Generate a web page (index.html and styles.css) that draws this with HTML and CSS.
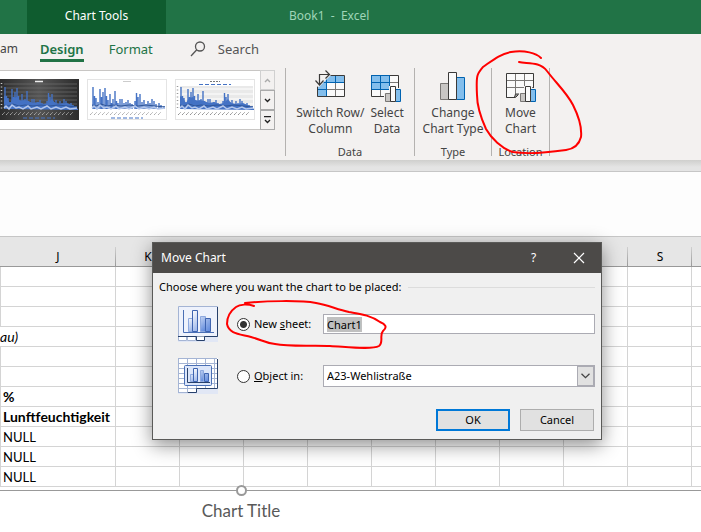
FILE: index.html
```html
<!DOCTYPE html>
<html lang="en">
<head>
<meta charset="utf-8">
<title>Book1 - Excel</title>
<link rel="stylesheet" href="styles.css">
</head>
<body>
<header class="titlebar">
  <div class="context-tab">Chart Tools</div>
  <div class="doc-name">Book1&nbsp; -&nbsp; Excel</div>
</header>

<nav class="tabs">
  <a class="tab tab-first" href="#">am</a>
  <a class="tab tab-active" href="#">Design</a>
  <a class="tab tab-context" href="#">Format</a>
  <button class="search" type="button">
    <svg width="16" height="16" viewBox="0 0 16 16" fill="none" stroke="#555" stroke-width="1.3"><circle cx="10" cy="5.5" r="4.5"/><path d="M6.8 8.8 1 15"/></svg>
    <span>Search</span>
  </button>
</nav>

<section class="ribbon">
  <svg class="defs" width="0" height="0" aria-hidden="true">
    <defs>
      <g id="spikes">
        <path fill="none" stroke="#4472c4" stroke-width="1.400" d="M6 30V8M7.500 30V17M9 30V19M11 30V23M13 30V10M14.500 30V18M16 30V13M18 30V9M19.500 30V17M21 30V21M23 30V15M24.500 30V24M26 30V20M28 30V12M29.500 30V22M31 30V24M33 30V20M35 30V20M37 30V24M39 30V23M41 30V21M43 30V24M45 30V25M48 30V22M49.500 30V14M51 30V18M53 30V15M55 30V23M57 30V21M59 30V25M61 30V22M63 30V24M65 30V20M67 30V22M69 30V25M72 30V24M74 30V26M77 30V27"/>
      </g>
      <g id="lows">
        <path fill="none" stroke="#2f5597" stroke-width="1" d="M5 26l4 1 5-2 6 2 6-1 8 1 8-1 9 1 8-1 9 1 10 1"/>
        <path fill="none" stroke="#b4c7ec" stroke-width="1.500" d="M5 29l2-2 3 3 3-4 4 3 3-1 4 2 5-3 3 3 6-2 4 2 6-3 4 3 5-2 5 2 5-2 4 2 7-1"/>
      </g>
      <path id="mass" fill="#4472c4" d="M5 30V17l3 2 3 5 3-5 4-1 3 4 4-1 4 1 5 2 5-1 5 2 5-1 4-4 3 4 6 1 6-1 7 3 4 3v1z"/>
      <path id="ticks" fill="none" stroke="currentColor" stroke-width=".8" stroke-dasharray="2.500 .8" d="M3 36l3-3M7 36l3-3M11 36l3-3M15 36l3-3M19 36l3-3M23 36l3-3M27 36l3-3M31 36l3-3M35 36l3-3M39 36l3-3M43 36l3-3M47 36l3-3M51 36l3-3M55 36l3-3M59 36l3-3M63 36l3-3M67 36l3-3M71 36l3-3"/>
      <g id="mini-bars">
        <path fill="#f3f1f0" d="M13 21h5v-7h8v2h6v16H13z"/>
        <path fill="#c8c6c4" stroke="#797775" d="M14.500 21.500h5v8h-5z"/>
        <path fill="#83beec" stroke="#0063b1" d="M24.500 17.500h5v12h-5z"/>
        <path fill="#fafafa" stroke="#3b3a39" d="M19.500 14.500h5v15h-5z"/>
      </g>
    </defs>
  </svg>

  <div class="gallery">
    <div class="styles">
      <button class="style dark" type="button" aria-label="Style 6">
        <svg width="80" height="41" viewBox="0 0 80 41"><path stroke="#777" stroke-width=".6" d="M5 5h73M5 9h73M5 13h73M5 17h73M5 21h73M5 25h73"/><path stroke="#eee" stroke-width="1.500" d="M36 2.500h8"/><path stroke="#ccc" stroke-dasharray="1 2.500" stroke-width="1.500" d="M2.500 4v27"/><use href="#mass"/><use href="#spikes"/><use href="#lows"/><g color="#bbb"><use href="#ticks"/></g><path stroke="#4472c4" stroke-dasharray="4 2" d="M24 39h32"/></svg>
      </button>
      <button class="style" type="button" aria-label="Style 7">
        <svg width="80" height="41" viewBox="0 0 80 41"><path stroke="#ccc" d="M36 2.500h8"/><use href="#spikes"/><use href="#lows"/><g color="#999"><use href="#ticks"/></g><path stroke="#4472c4" stroke-dasharray="4 2" d="M24 39h32"/></svg>
      </button>
      <button class="style" type="button" aria-label="Style 8">
        <svg width="80" height="41" viewBox="0 0 80 41"><path fill="#e9e9e9" d="M5 7h73v23H5z"/><path stroke="#fff" d="M5 10h73M5 15h73M5 20h73M5 25h73"/><path stroke="#777" stroke-dasharray="2 1" d="M35 2.500h10"/><path stroke="#4472c4" stroke-dasharray="4 2" d="M24 5.500h32"/><path stroke="#999" stroke-dasharray="1 2.500" stroke-width="1.500" d="M2.500 7v24"/><use href="#mass"/><use href="#spikes"/><use href="#lows"/><g color="#777"><use href="#ticks"/></g></svg>
      </button>
    </div>
    <div class="scroller">
      <button type="button" class="off" aria-label="Row up"><svg width="7" height="5" viewBox="0 0 7 5"><path d="M1 4l2.500-2.500L6 4"/></svg></button>
      <button type="button" aria-label="Row down"><svg width="7" height="5" viewBox="0 0 7 5"><path d="M1 1l2.500 2.500L6 1"/></svg></button>
      <button type="button" aria-label="More"><svg width="7" height="8" viewBox="0 0 7 8"><path d="M0 .5h7M1 4l2.500 2.500L6 4"/></svg></button>
    </div>
  </div>

  <div class="group">
    <div class="commands">
      <button class="command" type="button">
        <svg width="32" height="32" viewBox="0 0 32 32" fill="none">
          <path fill="#fafafa" d="M3.500 7.500h27v21h-27z"/><path fill="#83beec" d="M3.500 7.500h27v7h-18v14h-9z"/>
          <path stroke="#797775" d="M13 21.500h17M21.500 15v13"/><path stroke="#0063b1" d="M12.500 7.500v21M4 14.500h26M21.500 7.500v7M4 21.500h9"/>
          <path stroke="#3b3a39" d="M3.500 7.500h27v21h-27z"/><path fill="#f3f1f0" d="M0 4h13l4-2v5L5 19l-4-1z"/>
          <path stroke="#3b3a39" stroke-width="1.200" d="M5.500 17V6.500H15M1.500 12.500l4 4.500 4-4.500M11.500 2.500l4 4-4 4"/>
        </svg>
        <span>Switch Row/<br>Column</span>
      </button>
      <button class="command" type="button">
        <svg width="32" height="32" viewBox="0 0 32 32" fill="none">
          <path fill="#fafafa" d="M.500 7.500h27v21H.500z"/><path fill="#83beec" d="M.500 7.500h18v14H.500z"/>
          <path stroke="#797775" d="M19 14.500h8M19 21.500h8M9.500 22v6"/><path stroke="#3b3a39" d="M.500 7.500h27v21H.500z"/><path stroke="#0063b1" d="M.500 7.500h18v14H.500zM.500 14.500h18M9.500 7.500v14"/>
          <use href="#mini-bars" x="0" y="4"/>
        </svg>
        <span>Select<br>Data</span>
      </button>
    </div>
    <div class="caption">Data</div>
  </div>

  <div class="group group-type">
    <div class="commands">
      <button class="command" type="button">
        <svg width="32" height="32" viewBox="0 0 32 32">
          <path fill="#c8c6c4" stroke="#797775" d="M3.500 15.500h8v16h-8z"/><path fill="#83beec" stroke="#0063b1" d="M19.500 9.500h8v22h-8z"/><path fill="#fafafa" stroke="#3b3a39" d="M11.500 4.500h8v27h-8z"/>
        </svg>
        <span>Change<br>Chart Type</span>
      </button>
    </div>
    <div class="caption">Type</div>
  </div>

  <div class="group group-location">
    <div class="commands">
      <button class="command" type="button">
        <svg width="32" height="32" viewBox="0 0 32 32" fill="none">
          <path fill="#fafafa" stroke="#3b3a39" d="M28.500 20V5.500h-27v24h9l3.500-3.500h4"/>
          <path fill="#fafafa" d="M2 20h26v3H18l-5 4H2z"/>
          <path stroke="#797775" d="M2 12.500h26M2 19.500h26M10.500 6v20M19.500 6v12"/>
          <path stroke="#3b3a39" d="M1.500 29.500h7.500l3.500-3.500M9.500 29.500l1-3.500h3.500"/>
          <use href="#mini-bars" x="1" y="4"/>
        </svg>
        <span>Move<br>Chart</span>
      </button>
    </div>
    <div class="caption">Location</div>
  </div>
</section>

<div class="formula-bar"></div>

<main class="workbook">
  <table class="grid">
    <colgroup><col class="col-wide"><col span="10" class="col-std"></colgroup>
    <thead><tr><th scope="col">J</th><th scope="col">K</th><td></td><td></td><td></td><td></td><td></td><td></td><td></td><th scope="col">S</th><td></td></tr></thead>
    <tbody>
      <tr><td></td><td></td><td></td><td></td><td></td><td></td><td></td><td></td><td></td><td></td><td></td></tr>
      <tr><td></td><td></td><td></td><td></td><td></td><td></td><td></td><td></td><td></td><td></td><td></td></tr>
      <tr><td></td><td></td><td></td><td></td><td></td><td></td><td></td><td></td><td></td><td></td><td></td></tr>
      <tr><td class="spill">au)</td><td></td><td></td><td></td><td></td><td></td><td></td><td></td><td></td><td></td><td></td></tr>
      <tr><td></td><td></td><td></td><td></td><td></td><td></td><td></td><td></td><td></td><td></td><td></td></tr>
      <tr><td></td><td></td><td></td><td></td><td></td><td></td><td></td><td></td><td></td><td></td><td></td></tr>
      <tr><td class="strong">%</td><td></td><td></td><td></td><td></td><td></td><td></td><td></td><td></td><td></td><td></td></tr>
      <tr><td class="strong">Lunftfeuchtigkeit</td><td></td><td></td><td></td><td></td><td></td><td></td><td></td><td></td><td></td><td></td></tr>
      <tr><td>NULL</td><td></td><td></td><td></td><td></td><td></td><td></td><td></td><td></td><td></td><td></td></tr>
      <tr><td>NULL</td><td></td><td></td><td></td><td></td><td></td><td></td><td></td><td></td><td></td><td></td></tr>
      <tr><td>NULL</td><td></td><td></td><td></td><td></td><td></td><td></td><td></td><td></td><td></td><td></td></tr>
    </tbody>
  </table>
  <section class="chart">
    <span class="handle"></span>
    <h2>Chart Title</h2>
  </section>
</main>

<form class="dialog" role="dialog" aria-labelledby="dialog-title">
  <div class="dialog-bar">
    <span id="dialog-title" class="dialog-title">Move Chart</span>
    <button type="button" class="bar-button">?</button>
    <button type="button" class="bar-button" aria-label="Close"><svg width="12" height="12" viewBox="0 0 12 12" stroke="#fff" stroke-width="1.200"><path d="M1 1l10 10M11 1 1 11"/></svg></button>
  </div>
  <div class="dialog-body">
    <div class="legend"><span>Choose where you want the chart to be placed:</span></div>
    <div class="option">
      <svg class="picture" width="40" height="36" viewBox="0 0 40 36">
        <defs><linearGradient id="bar" x1="0" y1="0" x2="1" y2="1"><stop offset="0" stop-color="#fff"/><stop offset="1" stop-color="#5b86dc"/></linearGradient></defs>
        <path fill="#e1e7f5" d="M0 0h40v36H0z"/><path fill="#eef2fc" stroke="#a4b4d4" d="M.5.500h39v30H.500z"/><path fill="none" stroke="#27406b" d="M0 30.500h39.500V1"/>
        <path fill="none" stroke="#4a6fb5" d="M5.500 4v22.500H36"/>
        <path fill="url(#bar)" stroke="#8ea9df" d="M10.500 12.500h5v13h-5zM22.500 10.500h5v15h-5z"/><path fill="url(#bar)" stroke="#3f64b0" d="M14.500 4.500h5v21h-5zM27.500 12.500h5v13h-5z"/>
        <path fill="#fff" stroke="#a4b4d4" d="M.5 31v3.500h8V31M9.500 31v3.500h8V31"/><path fill="#fff" stroke="#27406b" d="M18.500 30.500v4h8v-4"/>
      </svg>
      <label class="choice"><input type="radio" name="place" checked><span>New <u>s</u>heet:</span></label>
      <input class="field" id="sheet-name" type="text" value="Chart1" aria-label="New sheet name">
    </div>
    <div class="option option-object">
      <svg class="picture" width="40" height="36" viewBox="0 0 40 36">
        <path fill="#e1e7f5" d="M0 0h40v36H0z"/><path fill="#fff" d="M0 0h40v31H18v4H0z"/>
        <path fill="none" stroke="#a4b4d4" d="M.5 0v34.500M9.500 0v34M18.500 0v34M27.500 0v30M36.500 0v30M0 .5h39M0 5.500h39M0 10.500h39M0 15.500h39M0 20.500h39M0 25.500h39M0 30.500h20M0 34.500h9"/>
        <path fill="none" stroke="#27406b" d="M39.500 1v29.500h-21v4h-9"/>
        <rect x="6.500" y="7.500" width="27" height="20" rx="1" fill="#dce6fa" stroke="#4a6fb5"/><path fill="none" stroke="#27406b" d="M9.500 10v14.500H32"/>
        <path fill="url(#bar)" stroke="#8ea9df" d="M12.500 16.500h3v7h-3zM22.500 12.500h3v11h-3z"/><path fill="url(#bar)" stroke="#3f64b0" d="M15.500 10.500h4v13h-4zM26.500 15.500h4v8h-4z"/>
      </svg>
      <label class="choice"><input type="radio" name="place"><span><u>O</u>bject in:</span></label>
      <div class="combo">
        <select aria-label="Object in"><option>A23-Wehlistraße</option></select>
        <span class="combo-arrow"><svg width="9" height="6" viewBox="0 0 9 6" fill="none" stroke="#444" stroke-width="1.300"><path d="M.5.700l4 4 4-4"/></svg></span>
      </div>
    </div>
    <div class="actions">
      <button type="button" class="action action-default">OK</button>
      <button type="button" class="action">Cancel</button>
    </div>
  </div>
</form>

<svg class="ink" width="701" height="532" viewBox="0 0 701 532" aria-hidden="true">
  <path d="M519 62C526 64 540 61 547 71C556 83 567 93 573 105C579 117 582 128 581 137C579 145 573 149 566 150C545 153 525 154 513 152C502 149 491 138 486 129C481 118 477 105 477 95C476 75 477 74 483 67C493 60 500 54 511 52C525 50 536 53 541 58"/>
  <path d="M254 306C248 304 240 304 236 307C229 312 227 318 227 324C229 334 240 334 251 337C262 340 266 343 275 344C290 347 315 345 330 346C348 347 372 350 379 346C384 342 379 335 383 331C388 327 385 324 380 322C370 315 360 314 349 312C336 309 328 305 316 303C300 300 265 301 245 303"/>
</svg>
<script src="dialog.js"></script>
</body>
</html>
```

FILE: styles.css
```css
* { box-sizing: border-box; }

html, body { height: 100%; }

body {
  margin: 0;
  display: flex;
  flex-direction: column;
  position: relative;
  overflow: hidden;
  background: #fff;
  color: #000;
  font: 12px/16px "Noto Sans", "Open Sans", sans-serif;
}

button, input, select { font: inherit; color: inherit; margin: 0; }
button { padding: 0; border: 0; background: none; }
svg { display: block; flex: none; }
.defs { position: absolute; }

.titlebar {
  display: flex;
  height: 34px;
  flex: none;
  line-height: 32px;
  background: #217346;
  color: #9fd5b7;
}
.context-tab {
  width: 139px;
  margin-left: 27px;
  text-align: center;
  background: #0f5c2f;
  color: #fff;
}
.doc-name { margin-left: 123px; }

.tabs {
  display: flex;
  align-items: flex-start;
  height: 36px;
  flex: none;
  background: #f3f1f0;
  font-size: 13px;
  line-height: 20px;
}
.tab {
  margin-top: 5px;
  color: #444;
  text-decoration: none;
  height: 23px;
}
.tab-first { width: 40px; font-size: 12px; }
.tab-active { color: #217346; font-weight: 600; border-bottom: 3px solid #217346; }
.tab-context { margin-left: 25px; color: #217346; }
.search { display: flex; align-items: center; gap: 12px; margin: 5px 0 0 37px; color: #555; }

.ribbon {
  display: flex;
  height: 90px;
  flex: none;
  background: #f3f1f0;
  color: #444;
}
.gallery {
  display: flex;
  width: 275px;
  height: 60px;
  border: 1px solid #c8c6c4;
  border-left: 0;
  border-right: 0;
  background: #fff;
}
.styles { display: flex; flex: 1; gap: 8px; padding-top: 8px; margin-left: -1px; }
.style { width: 80px; height: 41px; outline: 1px solid #e4e4e4; outline-offset: -1px; }
.style.dark { background: linear-gradient(90deg, #2c2c2c, #555 50%, #2c2c2c); outline: 0; }
.scroller { display: flex; flex-direction: column; width: 15px; margin: -1px 0; }
.scroller button {
  display: flex;
  flex: 1;
  align-items: center;
  justify-content: center;
  border: 1px solid #aaa;
  background: #f3f1f0;
}
.scroller path { fill: none; stroke: #222; stroke-width: 1.4; }
.scroller .off { border-color: #d0d0d0; }
.scroller .off path { stroke: #aaa; }

.group {
  display: flex;
  flex-direction: column;
  width: 129px;
  height: 88px;
  margin-left: 10px;
  margin-top: -2px;
  border-left: 1px solid #b4b2b0;
}
.group-type { width: 77px; margin-left: 0; }
.group-location { width: 59px; margin-left: 0; border-right: 1px solid #b4b2b0; }
.commands { display: flex; justify-content: center; gap: 6px; }
.command { white-space: nowrap; }
.command svg { margin: 0 auto 5px; overflow: visible; }
.command span { display: block; }
.caption { margin-top: 7px; text-align: center; font-size: 11px; }

.formula-bar {
  height: 77px;
  flex: none;
  border-bottom: 1px solid #c6c6c6;
  background: linear-gradient(#cfcfcd, #e4e4e4 7px, #e4e4e4 11px, #c6c6c6 11px, #c6c6c6 12px, #fdfdfd 12px);
}

.workbook { flex: 1; overflow: hidden; }
.grid {
  width: 756px;
  table-layout: fixed;
  border-spacing: 0;
  font: 13px/18px Lato, sans-serif;
}
.col-wide { width: 116px; }
.col-std { width: 64px; }
.grid th, .grid td {
  height: 20px;
  padding: 0 2px;
  border-right: 1px solid #d4d4d4;
  border-bottom: 1px solid #d4d4d4;
  white-space: nowrap;
}
.grid tbody tr > :first-child { border-left: 1px solid #d4d4d4; }
.grid thead th, .grid thead td {
  height: 30px;
  padding-top: 10px;
  border-right: 0;
  border-bottom-color: #999;
  background: linear-gradient(#d0d0d0, #999) right bottom / 1px 19px no-repeat #e6e6e6;
  font: 12px/18px "Noto Sans", sans-serif;
  text-align: center;
}
.grid tbody .spill, .grid .strong { font-size: 14px; }
.grid tbody tr > .spill { padding: 0; border-left: 0; font-style: italic; }
.grid .strong { font-weight: 700; }

.chart {
  position: relative;
  height: 100%;
  margin-top: 3px;
  border-top: 1px solid #999;
  background: #fff;
}
.chart h2 {
  width: 482px;
  margin: 10px 0 0;
  text-align: center;
  color: #595959;
  font: 17px/20px Lato, sans-serif;
}
.handle {
  position: absolute;
  left: 236px;
  top: -6px;
  width: 11px;
  height: 11px;
  border: 2px solid #999;
  border-radius: 50%;
  background: #fff;
}
.workbook { overflow: clip; overflow-clip-margin: 6px; }

.dialog {
  position: absolute;
  left: 152px;
  top: 242px;
  width: 450px;
  border: 1px solid #5a5a58;
  background: #f0f0f0;
  box-shadow: 0 5px 18px rgba(0, 0, 0, .45);
}
.dialog-bar { display: flex; align-items: center; height: 30px; padding-left: 8px; background: #4c4a48; color: #fff; }
.dialog-title { flex: 1; }
.bar-button { display: flex; justify-content: center; width: 45px; }
.dialog-body { padding: 6px 6px 8px; font-size: 11px; }
.legend { display: flex; align-items: center; gap: 6px; }
.legend::after { content: ""; flex: 1; border-top: 1px solid #dcdcdc; }
.option { display: flex; align-items: center; margin-top: 11px; padding-left: 19px; }
.option-object { margin-top: 16px; }
.choice { display: flex; align-items: center; gap: 4px; width: 86px; margin-left: 19px; }
.choice input {
  appearance: none;
  width: 13px;
  height: 13px;
  border: 1px solid #333;
  border-radius: 50%;
  background: #fff;
}
.choice input:checked { background: radial-gradient(#333 0 3px, #fff 4px); }
.field {
  flex: 1;
  min-width: 0;
  height: 20px;
  padding: 0 3px;
  border: 1px solid #ababb3;
  outline: 0;
  background: #fff;
}
.field::selection { background: #c0c0c0; color: #000; }
.combo { display: flex; flex: 1; height: 22px; border: 1px solid #ababb3; background: #fff; }
.combo select { appearance: none; flex: 1; padding: 0 3px; border: 0; outline: 0; background: none; }
.combo-arrow { display: flex; align-items: center; justify-content: center; width: 17px; border: 1px solid #ababb3; background: #e1e1e1; }
.actions { display: flex; justify-content: flex-end; gap: 10px; margin: 15px 1px 0 0; }
.action { width: 74px; height: 22px; border: 1px solid #adadad; background: #e1e1e1; }
.action-default { border: 2px solid #0078d7; }

.ink { position: absolute; left: 0; top: 0; pointer-events: none; }
.ink path { fill: none; stroke: #f00; stroke-width: 2; stroke-linecap: round; stroke-linejoin: round; }
```

FILE: dialog.js
```js
const sheetName = document.getElementById("sheet-name");
sheetName.focus();
sheetName.select();
```
